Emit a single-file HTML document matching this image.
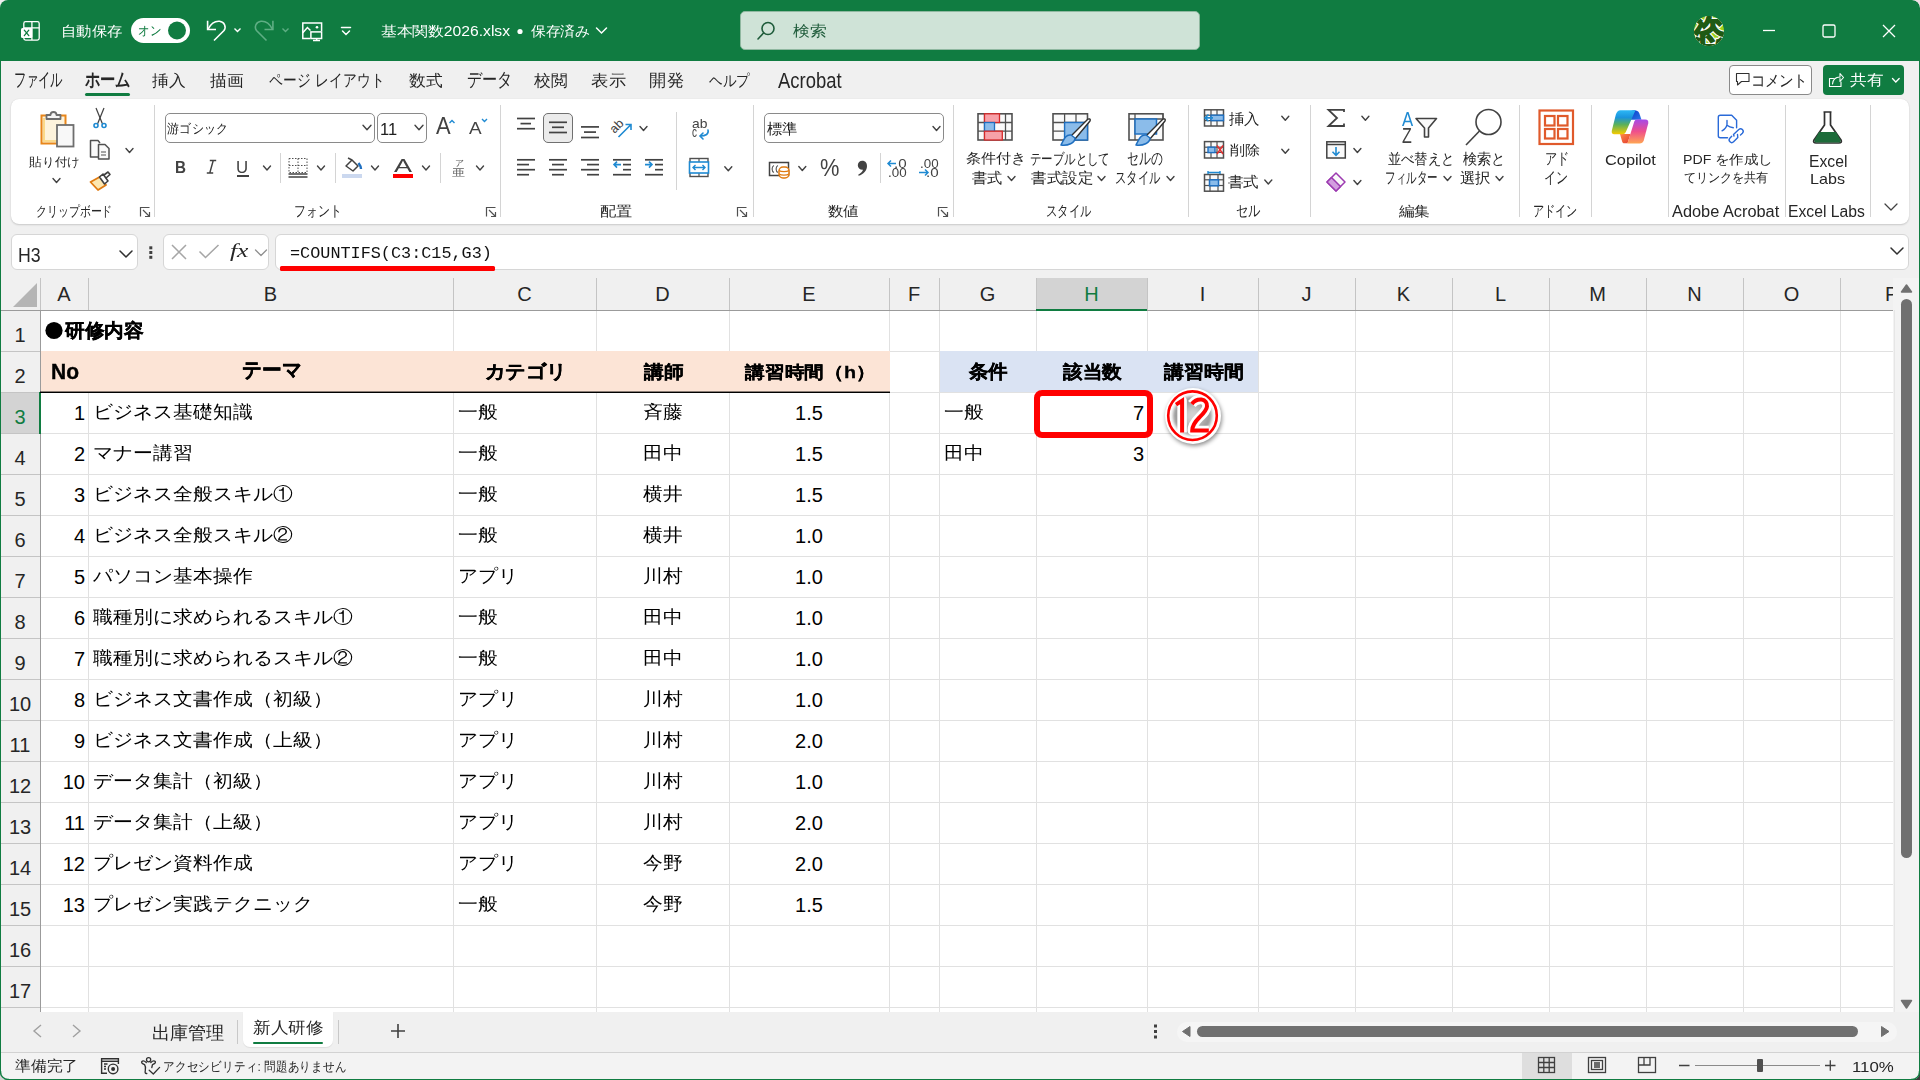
<!DOCTYPE html><html lang="ja"><head><meta charset="utf-8"><title>Excel</title><style>
*{box-sizing:border-box}
html,body{margin:0;padding:0}
body{width:1920px;height:1080px;overflow:hidden;position:relative;background:#f0f0f0;font-family:"Liberation Sans",sans-serif;color:#222}
.a{position:absolute}
.t{position:absolute;white-space:nowrap;line-height:1;transform-origin:0 0}
svg.o{position:absolute;left:0;top:0;overflow:visible}
</style></head><body>
<div class="a" style="left:0px;top:0px;width:1920px;height:61px;background:#107c41;border-radius:8px 8px 0 0"></div>
<div class="a" style="left:131px;top:18px;width:59px;height:25px;background:#fff;border-radius:13px"></div>
<div class="a" style="left:740px;top:11px;width:460px;height:39px;background:#cfe3d7;border-radius:5px;border:1px solid #8fb8a0"></div>
<div class="a" style="left:1px;top:61px;width:1918px;height:38px;background:#f0f0f0;"></div>
<div class="a" style="left:85px;top:93px;width:45px;height:3px;background:#107c41;border-radius:2px"></div>
<div class="a" style="left:1729px;top:65px;width:83px;height:30px;background:#fff;border:1px solid #8a8a8a;border-radius:4px"></div>
<div class="a" style="left:1823px;top:65px;width:81px;height:30px;background:#107c41;border-radius:4px"></div>
<div class="a" style="left:11px;top:99px;width:1898px;height:125px;background:#fff;border-radius:8px;box-shadow:0 1px 2px rgba(0,0,0,.16),0 0 1px rgba(0,0,0,.1)"></div>
<div class="a" style="left:154px;top:105px;width:1px;height:112px;background:#d4d4d4;"></div>
<div class="a" style="left:500px;top:105px;width:1px;height:112px;background:#d4d4d4;"></div>
<div class="a" style="left:753px;top:105px;width:1px;height:112px;background:#d4d4d4;"></div>
<div class="a" style="left:953px;top:105px;width:1px;height:112px;background:#d4d4d4;"></div>
<div class="a" style="left:1188px;top:105px;width:1px;height:112px;background:#d4d4d4;"></div>
<div class="a" style="left:1310px;top:105px;width:1px;height:112px;background:#d4d4d4;"></div>
<div class="a" style="left:1519px;top:105px;width:1px;height:112px;background:#d4d4d4;"></div>
<div class="a" style="left:1591px;top:105px;width:1px;height:112px;background:#d4d4d4;"></div>
<div class="a" style="left:1668px;top:105px;width:1px;height:112px;background:#d4d4d4;"></div>
<div class="a" style="left:1785px;top:105px;width:1px;height:112px;background:#d4d4d4;"></div>
<div class="a" style="left:1870px;top:105px;width:1px;height:112px;background:#d4d4d4;"></div>
<div class="a" style="left:165px;top:113px;width:210px;height:30px;background:#fff;border:1px solid #8a8a8a;border-radius:5px"></div>
<div class="a" style="left:377px;top:113px;width:50px;height:30px;background:#fff;border:1px solid #8a8a8a;border-radius:5px"></div>
<div class="a" style="left:237px;top:175px;width:12px;height:1.6px;background:#424242;"></div>
<div class="a" style="left:280px;top:153px;width:1px;height:30px;background:#d4d4d4;"></div>
<div class="a" style="left:334.6px;top:153px;width:1px;height:30px;background:#d4d4d4;"></div>
<div class="a" style="left:393px;top:174px;width:20px;height:4px;background:#ff0000;"></div>
<div class="a" style="left:439.6px;top:153px;width:1px;height:30px;background:#d4d4d4;"></div>
<div class="a" style="left:543px;top:113px;width:30px;height:30px;background:#ebebeb;border:1px solid #707070;border-radius:5px"></div>
<div class="a" style="left:676px;top:112px;width:1px;height:78px;background:#d4d4d4;"></div>
<div class="a" style="left:764px;top:113px;width:180px;height:30px;background:#fff;border:1px solid #8a8a8a;border-radius:5px"></div>
<div class="a" style="left:879.6px;top:153px;width:1px;height:30px;background:#d4d4d4;"></div>
<div class="a" style="left:11px;top:234px;width:127px;height:36px;background:#fff;border:1px solid #d6d6d6;border-radius:6px"></div>
<div class="a" style="left:163px;top:234px;width:106px;height:36px;background:#fff;border:1px solid #d6d6d6;border-radius:6px"></div>
<div class="a" style="left:275px;top:234px;width:1634px;height:36px;background:#fff;border:1px solid #d6d6d6;border-radius:6px"></div>
<div class="a" style="left:0px;top:270px;width:1920px;height:8px;background:#f0f0f0;"></div>
<div class="a" style="left:1px;top:278px;width:1894px;height:32px;background:#f0f0f0;"></div>
<div class="a" style="left:40px;top:310px;width:1853px;height:702px;background:#fff;"></div>
<div class="a" style="left:40px;top:278px;width:1px;height:32px;background:#c4c4c4;"></div>
<div class="a" style="left:88px;top:310px;width:1px;height:702px;background:#e1e1e1;"></div>
<div class="a" style="left:88px;top:278px;width:1px;height:32px;background:#c4c4c4;"></div>
<div class="a" style="left:453px;top:310px;width:1px;height:702px;background:#e1e1e1;"></div>
<div class="a" style="left:453px;top:278px;width:1px;height:32px;background:#c4c4c4;"></div>
<div class="a" style="left:596px;top:310px;width:1px;height:702px;background:#e1e1e1;"></div>
<div class="a" style="left:596px;top:278px;width:1px;height:32px;background:#c4c4c4;"></div>
<div class="a" style="left:729px;top:310px;width:1px;height:702px;background:#e1e1e1;"></div>
<div class="a" style="left:729px;top:278px;width:1px;height:32px;background:#c4c4c4;"></div>
<div class="a" style="left:889px;top:310px;width:1px;height:702px;background:#e1e1e1;"></div>
<div class="a" style="left:889px;top:278px;width:1px;height:32px;background:#c4c4c4;"></div>
<div class="a" style="left:939px;top:310px;width:1px;height:702px;background:#e1e1e1;"></div>
<div class="a" style="left:939px;top:278px;width:1px;height:32px;background:#c4c4c4;"></div>
<div class="a" style="left:1036px;top:310px;width:1px;height:702px;background:#e1e1e1;"></div>
<div class="a" style="left:1036px;top:278px;width:1px;height:32px;background:#c4c4c4;"></div>
<div class="a" style="left:1147px;top:310px;width:1px;height:702px;background:#e1e1e1;"></div>
<div class="a" style="left:1147px;top:278px;width:1px;height:32px;background:#c4c4c4;"></div>
<div class="a" style="left:1258px;top:310px;width:1px;height:702px;background:#e1e1e1;"></div>
<div class="a" style="left:1258px;top:278px;width:1px;height:32px;background:#c4c4c4;"></div>
<div class="a" style="left:1355px;top:310px;width:1px;height:702px;background:#e1e1e1;"></div>
<div class="a" style="left:1355px;top:278px;width:1px;height:32px;background:#c4c4c4;"></div>
<div class="a" style="left:1452px;top:310px;width:1px;height:702px;background:#e1e1e1;"></div>
<div class="a" style="left:1452px;top:278px;width:1px;height:32px;background:#c4c4c4;"></div>
<div class="a" style="left:1549px;top:310px;width:1px;height:702px;background:#e1e1e1;"></div>
<div class="a" style="left:1549px;top:278px;width:1px;height:32px;background:#c4c4c4;"></div>
<div class="a" style="left:1646px;top:310px;width:1px;height:702px;background:#e1e1e1;"></div>
<div class="a" style="left:1646px;top:278px;width:1px;height:32px;background:#c4c4c4;"></div>
<div class="a" style="left:1743px;top:310px;width:1px;height:702px;background:#e1e1e1;"></div>
<div class="a" style="left:1743px;top:278px;width:1px;height:32px;background:#c4c4c4;"></div>
<div class="a" style="left:1840px;top:310px;width:1px;height:702px;background:#e1e1e1;"></div>
<div class="a" style="left:1840px;top:278px;width:1px;height:32px;background:#c4c4c4;"></div>
<div class="a" style="left:40px;top:351px;width:1853px;height:1px;background:#e1e1e1;"></div>
<div class="a" style="left:40px;top:392px;width:1853px;height:1px;background:#e1e1e1;"></div>
<div class="a" style="left:40px;top:433px;width:1853px;height:1px;background:#e1e1e1;"></div>
<div class="a" style="left:40px;top:474px;width:1853px;height:1px;background:#e1e1e1;"></div>
<div class="a" style="left:40px;top:515px;width:1853px;height:1px;background:#e1e1e1;"></div>
<div class="a" style="left:40px;top:556px;width:1853px;height:1px;background:#e1e1e1;"></div>
<div class="a" style="left:40px;top:597px;width:1853px;height:1px;background:#e1e1e1;"></div>
<div class="a" style="left:40px;top:638px;width:1853px;height:1px;background:#e1e1e1;"></div>
<div class="a" style="left:40px;top:679px;width:1853px;height:1px;background:#e1e1e1;"></div>
<div class="a" style="left:40px;top:720px;width:1853px;height:1px;background:#e1e1e1;"></div>
<div class="a" style="left:40px;top:761px;width:1853px;height:1px;background:#e1e1e1;"></div>
<div class="a" style="left:40px;top:802px;width:1853px;height:1px;background:#e1e1e1;"></div>
<div class="a" style="left:40px;top:843px;width:1853px;height:1px;background:#e1e1e1;"></div>
<div class="a" style="left:40px;top:884px;width:1853px;height:1px;background:#e1e1e1;"></div>
<div class="a" style="left:40px;top:925px;width:1853px;height:1px;background:#e1e1e1;"></div>
<div class="a" style="left:40px;top:966px;width:1853px;height:1px;background:#e1e1e1;"></div>
<div class="a" style="left:40px;top:1007px;width:1853px;height:1px;background:#e1e1e1;"></div>
<div class="a" style="left:41px;top:351px;width:849px;height:41px;background:#fce4d6;"></div>
<div class="a" style="left:940px;top:351px;width:318px;height:41px;background:#dae3f3;"></div>
<div class="a" style="left:88px;top:311px;width:1px;height:40px;background:#fff;"></div>
<div class="a" style="left:1px;top:310px;width:39px;height:702px;background:#f0f0f0;"></div>
<div class="a" style="left:1px;top:351px;width:39px;height:1px;background:#c4c4c4;"></div>
<div class="a" style="left:1px;top:392px;width:39px;height:1px;background:#c4c4c4;"></div>
<div class="a" style="left:1px;top:433px;width:39px;height:1px;background:#c4c4c4;"></div>
<div class="a" style="left:1px;top:474px;width:39px;height:1px;background:#c4c4c4;"></div>
<div class="a" style="left:1px;top:515px;width:39px;height:1px;background:#c4c4c4;"></div>
<div class="a" style="left:1px;top:556px;width:39px;height:1px;background:#c4c4c4;"></div>
<div class="a" style="left:1px;top:597px;width:39px;height:1px;background:#c4c4c4;"></div>
<div class="a" style="left:1px;top:638px;width:39px;height:1px;background:#c4c4c4;"></div>
<div class="a" style="left:1px;top:679px;width:39px;height:1px;background:#c4c4c4;"></div>
<div class="a" style="left:1px;top:720px;width:39px;height:1px;background:#c4c4c4;"></div>
<div class="a" style="left:1px;top:761px;width:39px;height:1px;background:#c4c4c4;"></div>
<div class="a" style="left:1px;top:802px;width:39px;height:1px;background:#c4c4c4;"></div>
<div class="a" style="left:1px;top:843px;width:39px;height:1px;background:#c4c4c4;"></div>
<div class="a" style="left:1px;top:884px;width:39px;height:1px;background:#c4c4c4;"></div>
<div class="a" style="left:1px;top:925px;width:39px;height:1px;background:#c4c4c4;"></div>
<div class="a" style="left:1px;top:966px;width:39px;height:1px;background:#c4c4c4;"></div>
<div class="a" style="left:1px;top:1007px;width:39px;height:1px;background:#c4c4c4;"></div>
<div class="a" style="left:40px;top:310px;width:1px;height:702px;background:#9b9b9b;"></div>
<div class="a" style="left:1px;top:310px;width:1892px;height:1px;background:#9b9b9b;"></div>
<div class="a" style="left:1px;top:393px;width:39px;height:40px;background:#d3d3d3;"></div>
<div class="a" style="left:39px;top:392px;width:2px;height:42px;background:#107c41;"></div>
<div class="a" style="left:1037px;top:278px;width:110px;height:32px;background:#d3d3d3;"></div>
<div class="a" style="left:1036px;top:309px;width:111px;height:2px;background:#107c41;"></div>
<div class="t" style="left:40px;width:48px;text-align:center;top:284px;font-size:20px;color:#262626">A</div>
<div class="t" style="left:88px;width:365px;text-align:center;top:284px;font-size:20px;color:#262626">B</div>
<div class="t" style="left:453px;width:143px;text-align:center;top:284px;font-size:20px;color:#262626">C</div>
<div class="t" style="left:596px;width:133px;text-align:center;top:284px;font-size:20px;color:#262626">D</div>
<div class="t" style="left:729px;width:160px;text-align:center;top:284px;font-size:20px;color:#262626">E</div>
<div class="t" style="left:889px;width:50px;text-align:center;top:284px;font-size:20px;color:#262626">F</div>
<div class="t" style="left:939px;width:97px;text-align:center;top:284px;font-size:20px;color:#262626">G</div>
<div class="t" style="left:1036px;width:111px;text-align:center;top:284px;font-size:20px;color:#107c41">H</div>
<div class="t" style="left:1147px;width:111px;text-align:center;top:284px;font-size:20px;color:#262626">I</div>
<div class="t" style="left:1258px;width:97px;text-align:center;top:284px;font-size:20px;color:#262626">J</div>
<div class="t" style="left:1355px;width:97px;text-align:center;top:284px;font-size:20px;color:#262626">K</div>
<div class="t" style="left:1452px;width:97px;text-align:center;top:284px;font-size:20px;color:#262626">L</div>
<div class="t" style="left:1549px;width:97px;text-align:center;top:284px;font-size:20px;color:#262626">M</div>
<div class="t" style="left:1646px;width:97px;text-align:center;top:284px;font-size:20px;color:#262626">N</div>
<div class="t" style="left:1743px;width:97px;text-align:center;top:284px;font-size:20px;color:#262626">O</div>
<div class="t" style="left:1885px;top:284px;font-size:20px;color:#262626;width:8px;overflow:hidden">P</div>
<div class="t" style="left:0;width:40px;text-align:center;top:325px;font-size:20px;color:#262626">1</div>
<div class="t" style="left:0;width:40px;text-align:center;top:366px;font-size:20px;color:#262626">2</div>
<div class="t" style="left:0;width:40px;text-align:center;top:407px;font-size:20px;color:#107c41">3</div>
<div class="t" style="left:0;width:40px;text-align:center;top:448px;font-size:20px;color:#262626">4</div>
<div class="t" style="left:0;width:40px;text-align:center;top:489px;font-size:20px;color:#262626">5</div>
<div class="t" style="left:0;width:40px;text-align:center;top:530px;font-size:20px;color:#262626">6</div>
<div class="t" style="left:0;width:40px;text-align:center;top:571px;font-size:20px;color:#262626">7</div>
<div class="t" style="left:0;width:40px;text-align:center;top:612px;font-size:20px;color:#262626">8</div>
<div class="t" style="left:0;width:40px;text-align:center;top:653px;font-size:20px;color:#262626">9</div>
<div class="t" style="left:0;width:40px;text-align:center;top:694px;font-size:20px;color:#262626">10</div>
<div class="t" style="left:0;width:40px;text-align:center;top:735px;font-size:20px;color:#262626">11</div>
<div class="t" style="left:0;width:40px;text-align:center;top:776px;font-size:20px;color:#262626">12</div>
<div class="t" style="left:0;width:40px;text-align:center;top:817px;font-size:20px;color:#262626">13</div>
<div class="t" style="left:0;width:40px;text-align:center;top:858px;font-size:20px;color:#262626">14</div>
<div class="t" style="left:0;width:40px;text-align:center;top:899px;font-size:20px;color:#262626">15</div>
<div class="t" style="left:0;width:40px;text-align:center;top:940px;font-size:20px;color:#262626">16</div>
<div class="t" style="left:0;width:40px;text-align:center;top:981px;font-size:20px;color:#262626">17</div>
<div class="a" style="left:40px;top:392px;width:850px;height:1px;background:#000;"></div>
<div class="a" style="left:40px;top:391px;width:850px;height:1px;background:rgba(0,0,0,.45);"></div>
<div class="t" style="left:40px;width:45px;text-align:right;top:403px;font-size:20px;color:#000;">1</div>
<div class="t" style="left:93px;top:403px;font-size:20px;color:#000;transform:scaleY(0.91);">ビジネス基礎知識</div>
<div class="t" style="left:458px;top:403px;font-size:20px;color:#000;transform:scaleY(0.91);">一般</div>
<div class="t" style="left:596px;width:133px;text-align:center;top:403px;font-size:20px;color:#000;transform:scaleY(0.91);">斉藤</div>
<div class="t" style="left:729px;width:160px;text-align:center;top:403px;font-size:20px;color:#000;">1.5</div>
<div class="t" style="left:40px;width:45px;text-align:right;top:444px;font-size:20px;color:#000;">2</div>
<div class="t" style="left:93px;top:444px;font-size:20px;color:#000;transform:scaleY(0.91);">マナー講習</div>
<div class="t" style="left:458px;top:444px;font-size:20px;color:#000;transform:scaleY(0.91);">一般</div>
<div class="t" style="left:596px;width:133px;text-align:center;top:444px;font-size:20px;color:#000;transform:scaleY(0.91);">田中</div>
<div class="t" style="left:729px;width:160px;text-align:center;top:444px;font-size:20px;color:#000;">1.5</div>
<div class="t" style="left:40px;width:45px;text-align:right;top:485px;font-size:20px;color:#000;">3</div>
<div class="t" style="left:93px;top:485px;font-size:20px;color:#000;transform:scaleY(0.91);">ビジネス全般スキル①</div>
<div class="t" style="left:458px;top:485px;font-size:20px;color:#000;transform:scaleY(0.91);">一般</div>
<div class="t" style="left:596px;width:133px;text-align:center;top:485px;font-size:20px;color:#000;transform:scaleY(0.91);">横井</div>
<div class="t" style="left:729px;width:160px;text-align:center;top:485px;font-size:20px;color:#000;">1.5</div>
<div class="t" style="left:40px;width:45px;text-align:right;top:526px;font-size:20px;color:#000;">4</div>
<div class="t" style="left:93px;top:526px;font-size:20px;color:#000;transform:scaleY(0.91);">ビジネス全般スキル②</div>
<div class="t" style="left:458px;top:526px;font-size:20px;color:#000;transform:scaleY(0.91);">一般</div>
<div class="t" style="left:596px;width:133px;text-align:center;top:526px;font-size:20px;color:#000;transform:scaleY(0.91);">横井</div>
<div class="t" style="left:729px;width:160px;text-align:center;top:526px;font-size:20px;color:#000;">1.0</div>
<div class="t" style="left:40px;width:45px;text-align:right;top:567px;font-size:20px;color:#000;">5</div>
<div class="t" style="left:93px;top:567px;font-size:20px;color:#000;transform:scaleY(0.91);">パソコン基本操作</div>
<div class="t" style="left:458px;top:567px;font-size:20px;color:#000;transform:scaleY(0.91);">アプリ</div>
<div class="t" style="left:596px;width:133px;text-align:center;top:567px;font-size:20px;color:#000;transform:scaleY(0.91);">川村</div>
<div class="t" style="left:729px;width:160px;text-align:center;top:567px;font-size:20px;color:#000;">1.0</div>
<div class="t" style="left:40px;width:45px;text-align:right;top:608px;font-size:20px;color:#000;">6</div>
<div class="t" style="left:93px;top:608px;font-size:20px;color:#000;transform:scaleY(0.91);">職種別に求められるスキル①</div>
<div class="t" style="left:458px;top:608px;font-size:20px;color:#000;transform:scaleY(0.91);">一般</div>
<div class="t" style="left:596px;width:133px;text-align:center;top:608px;font-size:20px;color:#000;transform:scaleY(0.91);">田中</div>
<div class="t" style="left:729px;width:160px;text-align:center;top:608px;font-size:20px;color:#000;">1.0</div>
<div class="t" style="left:40px;width:45px;text-align:right;top:649px;font-size:20px;color:#000;">7</div>
<div class="t" style="left:93px;top:649px;font-size:20px;color:#000;transform:scaleY(0.91);">職種別に求められるスキル②</div>
<div class="t" style="left:458px;top:649px;font-size:20px;color:#000;transform:scaleY(0.91);">一般</div>
<div class="t" style="left:596px;width:133px;text-align:center;top:649px;font-size:20px;color:#000;transform:scaleY(0.91);">田中</div>
<div class="t" style="left:729px;width:160px;text-align:center;top:649px;font-size:20px;color:#000;">1.0</div>
<div class="t" style="left:40px;width:45px;text-align:right;top:690px;font-size:20px;color:#000;">8</div>
<div class="t" style="left:93px;top:690px;font-size:20px;color:#000;transform:scaleY(0.91);">ビジネス文書作成（初級）</div>
<div class="t" style="left:458px;top:690px;font-size:20px;color:#000;transform:scaleY(0.91);">アプリ</div>
<div class="t" style="left:596px;width:133px;text-align:center;top:690px;font-size:20px;color:#000;transform:scaleY(0.91);">川村</div>
<div class="t" style="left:729px;width:160px;text-align:center;top:690px;font-size:20px;color:#000;">1.0</div>
<div class="t" style="left:40px;width:45px;text-align:right;top:731px;font-size:20px;color:#000;">9</div>
<div class="t" style="left:93px;top:731px;font-size:20px;color:#000;transform:scaleY(0.91);">ビジネス文書作成（上級）</div>
<div class="t" style="left:458px;top:731px;font-size:20px;color:#000;transform:scaleY(0.91);">アプリ</div>
<div class="t" style="left:596px;width:133px;text-align:center;top:731px;font-size:20px;color:#000;transform:scaleY(0.91);">川村</div>
<div class="t" style="left:729px;width:160px;text-align:center;top:731px;font-size:20px;color:#000;">2.0</div>
<div class="t" style="left:40px;width:45px;text-align:right;top:772px;font-size:20px;color:#000;">10</div>
<div class="t" style="left:93px;top:772px;font-size:20px;color:#000;transform:scaleY(0.91);">データ集計（初級）</div>
<div class="t" style="left:458px;top:772px;font-size:20px;color:#000;transform:scaleY(0.91);">アプリ</div>
<div class="t" style="left:596px;width:133px;text-align:center;top:772px;font-size:20px;color:#000;transform:scaleY(0.91);">川村</div>
<div class="t" style="left:729px;width:160px;text-align:center;top:772px;font-size:20px;color:#000;">1.0</div>
<div class="t" style="left:40px;width:45px;text-align:right;top:813px;font-size:20px;color:#000;">11</div>
<div class="t" style="left:93px;top:813px;font-size:20px;color:#000;transform:scaleY(0.91);">データ集計（上級）</div>
<div class="t" style="left:458px;top:813px;font-size:20px;color:#000;transform:scaleY(0.91);">アプリ</div>
<div class="t" style="left:596px;width:133px;text-align:center;top:813px;font-size:20px;color:#000;transform:scaleY(0.91);">川村</div>
<div class="t" style="left:729px;width:160px;text-align:center;top:813px;font-size:20px;color:#000;">2.0</div>
<div class="t" style="left:40px;width:45px;text-align:right;top:854px;font-size:20px;color:#000;">12</div>
<div class="t" style="left:93px;top:854px;font-size:20px;color:#000;transform:scaleY(0.91);">プレゼン資料作成</div>
<div class="t" style="left:458px;top:854px;font-size:20px;color:#000;transform:scaleY(0.91);">アプリ</div>
<div class="t" style="left:596px;width:133px;text-align:center;top:854px;font-size:20px;color:#000;transform:scaleY(0.91);">今野</div>
<div class="t" style="left:729px;width:160px;text-align:center;top:854px;font-size:20px;color:#000;">2.0</div>
<div class="t" style="left:40px;width:45px;text-align:right;top:895px;font-size:20px;color:#000;">13</div>
<div class="t" style="left:93px;top:895px;font-size:20px;color:#000;transform:scaleY(0.91);">プレゼン実践テクニック</div>
<div class="t" style="left:458px;top:895px;font-size:20px;color:#000;transform:scaleY(0.91);">一般</div>
<div class="t" style="left:596px;width:133px;text-align:center;top:895px;font-size:20px;color:#000;transform:scaleY(0.91);">今野</div>
<div class="t" style="left:729px;width:160px;text-align:center;top:895px;font-size:20px;color:#000;">1.5</div>
<div class="t" style="left:944px;top:403px;font-size:20px;color:#000;transform:scaleY(0.91);">一般</div>
<div class="t" style="left:944px;top:444px;font-size:20px;color:#000;transform:scaleY(0.91);">田中</div>
<div class="t" style="left:1036px;width:108px;text-align:right;top:403px;font-size:20px;color:#000;">7</div>
<div class="t" style="left:1036px;width:108px;text-align:right;top:444px;font-size:20px;color:#000;">3</div>
<div class="a" style="left:1033.5px;top:389.5px;width:119px;height:48px;background:transparent;border:6px solid #ff0000;border-radius:8px"></div>
<div class="a" style="left:1164.5px;top:388px;width:56px;height:56px;border-radius:50%;background:#fff;box-shadow:1px 2px 4px rgba(0,0,0,.45)"></div>
<div class="a" style="left:1893px;top:278px;width:26px;height:734px;background:#f3f3f3;"></div>
<div class="a" style="left:1894px;top:310px;width:1px;height:702px;background:#e6e6e6;"></div>
<div class="a" style="left:1901px;top:299px;width:11px;height:559px;background:#707070;border-radius:6px"></div>
<div class="a" style="left:1px;top:1012px;width:1918px;height:40px;background:#f0f0f0;"></div>
<div class="a" style="left:237px;top:1020px;width:1px;height:24px;background:#c8c8c8;"></div>
<div class="a" style="left:243px;top:1012px;width:90px;height:35px;background:#fff;border-radius:0 0 7px 7px;box-shadow:0 1px 1px rgba(0,0,0,.08)"></div>
<div class="a" style="left:253px;top:1041.7px;width:70px;height:2.5px;background:#107c41;border-radius:1px"></div>
<div class="a" style="left:338px;top:1020px;width:1px;height:24px;background:#c8c8c8;"></div>
<div class="a" style="left:1177px;top:1022px;width:720px;height:20px;background:#f5f5f5;border-radius:10px"></div>
<div class="a" style="left:1197.4px;top:1026px;width:661px;height:11px;background:#707070;border-radius:6px"></div>
<div class="a" style="left:1px;top:1052px;width:1918px;height:27px;background:#f3f3f3;"></div>
<div class="a" style="left:1px;top:1052px;width:1918px;height:1px;background:#d2d2d2;"></div>
<div class="a" style="left:1522px;top:1053px;width:50px;height:26px;background:#dedede;"></div>
<div class="a" style="left:1695px;top:1065px;width:125px;height:1px;background:#8a8a8a;"></div>
<div class="a" style="left:1757px;top:1058.8px;width:6px;height:13.7px;background:#505050;border-radius:1px"></div>
<div class="a" style="left:0px;top:61px;width:1px;height:1019px;background:#107c41;"></div>
<div class="a" style="left:1919px;top:61px;width:1px;height:1019px;background:#107c41;"></div>
<div class="a" style="left:0px;top:1079px;width:1920px;height:1px;background:#107c41;"></div>
<div class="t" style="left:60.96px;top:24.07px;font-family:'Liberation Sans',sans-serif;font-size:15px;font-weight:normal;font-style:normal;color:#ffffff;transform:scale(1.0175,0.9286);">自動保存</div>
<div class="t" style="left:138.15px;top:24.08px;font-family:'Liberation Sans',sans-serif;font-size:14px;font-weight:normal;font-style:normal;color:#107c41;transform:scale(0.8462,0.9583);">オン</div>
<div class="t" style="left:381.02px;top:24.50px;font-family:'Liberation Sans',sans-serif;font-size:16px;font-weight:normal;font-style:normal;color:#ffffff;transform:scale(0.9808,0.8667);">基本関数2026.xlsx</div>
<div class="t" style="left:531.00px;top:24.50px;font-family:'Liberation Sans',sans-serif;font-size:16px;font-weight:normal;font-style:normal;color:#ffffff;transform:scale(0.9206,0.8667);">保存済み</div>
<div class="t" style="left:792.50px;top:23.00px;font-family:'Liberation Sans',sans-serif;font-size:15px;font-weight:normal;font-style:normal;color:#1e5b3a;transform:scale(1.1207,1.0000);">検索</div>
<div class="t" style="left:13.58px;top:70.81px;font-family:'Liberation Sans',sans-serif;font-size:17px;font-weight:normal;font-style:normal;color:#262626;transform:scale(0.7121,1.0929);">ファイル</div>
<div class="t" style="left:85.00px;top:70.81px;font-family:'Liberation Sans',sans-serif;font-size:17px;font-weight:bold;font-style:normal;color:#262626;transform:scale(0.8800,1.0929);">ホーム</div>
<div class="t" style="left:152.00px;top:73.00px;font-family:'Liberation Sans',sans-serif;font-size:17px;font-weight:normal;font-style:normal;color:#262626;transform:scale(1.0000,0.9562);">挿入</div>
<div class="t" style="left:210.00px;top:73.00px;font-family:'Liberation Sans',sans-serif;font-size:17px;font-weight:normal;font-style:normal;color:#262626;transform:scale(1.0000,0.9562);">描画</div>
<div class="t" style="left:269.18px;top:71.98px;font-family:'Liberation Sans',sans-serif;font-size:17px;font-weight:normal;font-style:normal;color:#262626;transform:scale(0.8235,1.0200);">ページ レイアウト</div>
<div class="t" style="left:409.00px;top:73.00px;font-family:'Liberation Sans',sans-serif;font-size:17px;font-weight:normal;font-style:normal;color:#262626;transform:scale(1.0000,0.9562);">数式</div>
<div class="t" style="left:467.13px;top:70.81px;font-family:'Liberation Sans',sans-serif;font-size:17px;font-weight:normal;font-style:normal;color:#262626;transform:scale(0.8723,1.0929);">データ</div>
<div class="t" style="left:534.00px;top:73.00px;font-family:'Liberation Sans',sans-serif;font-size:17px;font-weight:normal;font-style:normal;color:#262626;transform:scale(1.0000,0.9562);">校閲</div>
<div class="t" style="left:590.97px;top:73.00px;font-family:'Liberation Sans',sans-serif;font-size:17px;font-weight:normal;font-style:normal;color:#262626;transform:scale(1.0312,0.9562);">表示</div>
<div class="t" style="left:648.97px;top:71.98px;font-family:'Liberation Sans',sans-serif;font-size:17px;font-weight:normal;font-style:normal;color:#262626;transform:scale(1.0312,1.0200);">開発</div>
<div class="t" style="left:709.00px;top:73.00px;font-family:'Liberation Sans',sans-serif;font-size:17px;font-weight:normal;font-style:normal;color:#262626;transform:scale(0.8077,0.9562);">ヘルプ</div>
<div class="t" style="left:778.00px;top:70.45px;font-family:'Liberation Sans',sans-serif;font-size:17px;font-weight:normal;font-style:normal;color:#262626;transform:scale(1.0847,1.2750);">Acrobat</div>
<div class="t" style="left:1751.41px;top:71.92px;font-family:'Liberation Sans',sans-serif;font-size:15px;font-weight:normal;font-style:normal;color:#262626;transform:scale(0.9444,1.0385);">コメント</div>
<div class="t" style="left:1849.70px;top:73.40px;font-family:'Liberation Sans',sans-serif;font-size:16px;font-weight:normal;font-style:normal;color:#ffffff;transform:scale(1.0548,0.9533);">共有</div>
<div class="t" style="left:35.74px;top:203.57px;font-family:'Liberation Sans',sans-serif;font-size:15px;font-weight:normal;font-style:normal;color:#262626;transform:scale(0.7277,0.9286);">クリップボード</div>
<div class="t" style="left:294.01px;top:203.00px;font-family:'Liberation Sans',sans-serif;font-size:15px;font-weight:normal;font-style:normal;color:#262626;transform:scale(0.7944,1.0000);">フォント</div>
<div class="t" style="left:600.35px;top:203.79px;font-family:'Liberation Sans',sans-serif;font-size:15px;font-weight:normal;font-style:normal;color:#262626;transform:scale(1.0500,0.9071);">配置</div>
<div class="t" style="left:828.30px;top:203.79px;font-family:'Liberation Sans',sans-serif;font-size:15px;font-weight:normal;font-style:normal;color:#262626;transform:scale(1.0033,0.9071);">数値</div>
<div class="t" style="left:1046.40px;top:203.03px;font-family:'Liberation Sans',sans-serif;font-size:15px;font-weight:normal;font-style:normal;color:#262626;transform:scale(0.7500,0.9846);">スタイル</div>
<div class="t" style="left:1236.08px;top:201.80px;font-family:'Liberation Sans',sans-serif;font-size:15px;font-weight:normal;font-style:normal;color:#262626;transform:scale(0.8172,1.0667);">セル</div>
<div class="t" style="left:1399.00px;top:204.09px;font-family:'Liberation Sans',sans-serif;font-size:15px;font-weight:normal;font-style:normal;color:#262626;transform:scale(1.0207,0.9143);">編集</div>
<div class="t" style="left:1532.77px;top:203.03px;font-family:'Liberation Sans',sans-serif;font-size:15px;font-weight:normal;font-style:normal;color:#262626;transform:scale(0.7328,0.9846);">アドイン</div>
<div class="t" style="left:1672.40px;top:202.78px;font-family:'Liberation Sans',sans-serif;font-size:15px;font-weight:normal;font-style:normal;color:#262626;transform:scale(1.0898,1.1091);">Adobe Acrobat</div>
<div class="t" style="left:1788.25px;top:202.78px;font-family:'Liberation Sans',sans-serif;font-size:15px;font-weight:normal;font-style:normal;color:#262626;transform:scale(1.0472,1.1091);">Excel Labs</div>
<div class="t" style="left:29.20px;top:154.59px;font-family:'Liberation Sans',sans-serif;font-size:15px;font-weight:normal;font-style:normal;color:#262626;transform:scale(0.8542,0.8133);">貼り付け</div>
<div class="t" style="left:166.58px;top:121.11px;font-family:'Liberation Sans',sans-serif;font-size:15px;font-weight:normal;font-style:normal;color:#202020;transform:scale(0.8239,0.8929);">游ゴシック</div>
<div class="t" style="left:379.90px;top:119.55px;font-family:'Liberation Sans',sans-serif;font-size:15px;font-weight:normal;font-style:normal;color:#202020;transform:scale(1.1000,1.1500);">11</div>
<div class="t" style="left:436.00px;top:114.31px;font-family:'Liberation Sans',sans-serif;font-size:19px;font-weight:normal;font-style:normal;color:#424242;transform:scale(1.1538,1.2308);">A</div>
<div class="t" style="left:469.00px;top:119.92px;font-family:'Liberation Sans',sans-serif;font-size:16px;font-weight:normal;font-style:normal;color:#424242;transform:scale(1.1818,1.0833);">A</div>
<div class="t" style="left:174.55px;top:158.92px;font-family:'Liberation Sans',sans-serif;font-size:16px;font-weight:bold;font-style:normal;color:#424242;transform:scale(0.9500,1.0833);">B</div>
<div class="t" style="left:236.45px;top:158.92px;font-family:'Liberation Sans',sans-serif;font-size:16px;font-weight:normal;font-style:normal;color:#424242;transform:scale(1.0500,1.0833);">U</div>
<div class="t" style="left:394.00px;top:156.42px;font-family:'Liberation Sans',sans-serif;font-size:18px;font-weight:normal;font-style:normal;color:#424242;transform:scale(1.5000,1.0385);">A</div>
<div class="t" style="left:454.83px;top:159.00px;font-family:'Liberation Sans',sans-serif;font-size:8px;font-weight:normal;font-style:normal;color:#606060;transform:scale(1.1667,1.1667);">ア</div>
<div class="t" style="left:452.00px;top:168.00px;font-family:'Liberation Sans',sans-serif;font-size:11px;font-weight:normal;font-style:normal;color:#606060;transform:scale(1.1818,0.9000);">亜</div>
<div class="t" style="left:692.00px;top:116.89px;font-family:'Liberation Sans',sans-serif;font-size:12px;font-weight:normal;font-style:normal;color:#424242;transform:scale(1.1538,1.1111);">ab</div>
<div class="t" style="left:692.00px;top:125.57px;font-family:'Liberation Sans',sans-serif;font-size:12px;font-weight:normal;font-style:normal;color:#424242;transform:scale(0.8333,1.1429);">c</div>
<div class="t" style="left:767.00px;top:120.70px;font-family:'Liberation Sans',sans-serif;font-size:15px;font-weight:normal;font-style:normal;color:#202020;transform:scale(1.0172,1.0000);">標準</div>
<div class="t" style="left:819.79px;top:156.48px;font-family:'Liberation Sans',sans-serif;font-size:18px;font-weight:normal;font-style:normal;color:#424242;transform:scale(1.2133,1.3615);">%</div>
<div class="t" style="left:893.62px;top:156.81px;font-family:'Liberation Sans',sans-serif;font-size:11px;font-weight:normal;font-style:normal;color:#424242;transform:scale(1.3750,1.1875);">.0</div>
<div class="t" style="left:887.79px;top:166.88px;font-family:'Liberation Sans',sans-serif;font-size:11px;font-weight:normal;font-style:normal;color:#424242;transform:scale(1.2143,1.1250);">.00</div>
<div class="t" style="left:919.79px;top:156.81px;font-family:'Liberation Sans',sans-serif;font-size:11px;font-weight:normal;font-style:normal;color:#424242;transform:scale(1.2143,1.1875);">.00</div>
<div class="t" style="left:925.62px;top:166.88px;font-family:'Liberation Sans',sans-serif;font-size:11px;font-weight:normal;font-style:normal;color:#424242;transform:scale(1.3750,1.1250);">.0</div>
<div class="t" style="left:965.69px;top:151.47px;font-family:'Liberation Sans',sans-serif;font-size:15px;font-weight:normal;font-style:normal;color:#262626;transform:scale(1.0054,0.9267);">条件付き</div>
<div class="t" style="left:971.69px;top:170.00px;font-family:'Liberation Sans',sans-serif;font-size:15px;font-weight:normal;font-style:normal;color:#262626;transform:scale(1.0103,1.0000);">書式</div>
<div class="t" style="left:1029.84px;top:151.41px;font-family:'Liberation Sans',sans-serif;font-size:15px;font-weight:normal;font-style:normal;color:#262626;transform:scale(0.7608,0.9929);">テーブルとして</div>
<div class="t" style="left:1030.97px;top:170.00px;font-family:'Liberation Sans',sans-serif;font-size:15px;font-weight:normal;font-style:normal;color:#262626;transform:scale(1.0345,1.0000);">書式設定</div>
<div class="t" style="left:1127.19px;top:148.93px;font-family:'Liberation Sans',sans-serif;font-size:15px;font-weight:normal;font-style:normal;color:#262626;transform:scale(0.8091,1.1583);">セルの</div>
<div class="t" style="left:1115.17px;top:168.85px;font-family:'Liberation Sans',sans-serif;font-size:15px;font-weight:normal;font-style:normal;color:#262626;transform:scale(0.7638,1.0769);">スタイル</div>
<div class="t" style="left:1229.20px;top:110.63px;font-family:'Liberation Sans',sans-serif;font-size:15px;font-weight:normal;font-style:normal;color:#262626;transform:scale(1.0034,0.9714);">挿入</div>
<div class="t" style="left:1230.00px;top:142.99px;font-family:'Liberation Sans',sans-serif;font-size:15px;font-weight:normal;font-style:normal;color:#262626;transform:scale(0.9759,0.9071);">削除</div>
<div class="t" style="left:1228.20px;top:174.33px;font-family:'Liberation Sans',sans-serif;font-size:15px;font-weight:normal;font-style:normal;color:#262626;transform:scale(1.0034,0.9714);">書式</div>
<div class="t" style="left:1401.50px;top:109.75px;font-family:'Liberation Sans',sans-serif;font-size:16px;font-weight:normal;font-style:normal;color:#1f8ad2;transform:scale(1.0455,1.2500);">A</div>
<div class="t" style="left:1402.00px;top:125.12px;font-family:'Liberation Sans',sans-serif;font-size:16px;font-weight:normal;font-style:normal;color:#424242;transform:scale(1.0000,1.3750);">Z</div>
<div class="t" style="left:1388.00px;top:151.41px;font-family:'Liberation Sans',sans-serif;font-size:15px;font-weight:normal;font-style:normal;color:#262626;transform:scale(0.8806,0.9929);">並べ替えと</div>
<div class="t" style="left:1384.58px;top:168.85px;font-family:'Liberation Sans',sans-serif;font-size:15px;font-weight:normal;font-style:normal;color:#262626;transform:scale(0.7083,1.0769);">フィルター</div>
<div class="t" style="left:1463.30px;top:151.41px;font-family:'Liberation Sans',sans-serif;font-size:15px;font-weight:normal;font-style:normal;color:#262626;transform:scale(0.9405,0.9929);">検索と</div>
<div class="t" style="left:1460.27px;top:170.00px;font-family:'Liberation Sans',sans-serif;font-size:15px;font-weight:normal;font-style:normal;color:#262626;transform:scale(1.0250,1.0000);">選択</div>
<div class="t" style="left:1544.59px;top:150.26px;font-family:'Liberation Sans',sans-serif;font-size:15px;font-weight:normal;font-style:normal;color:#262626;transform:scale(0.8074,1.0692);">アド</div>
<div class="t" style="left:1543.79px;top:168.85px;font-family:'Liberation Sans',sans-serif;font-size:15px;font-weight:normal;font-style:normal;color:#262626;transform:scale(0.8074,1.0769);">イン</div>
<div class="t" style="left:1604.84px;top:151.97px;font-family:'Liberation Sans',sans-serif;font-size:17px;font-weight:normal;font-style:normal;color:#262626;transform:scale(0.9615,0.9133);">Copilot</div>
<div class="t" style="left:1683.05px;top:153.15px;font-family:'Liberation Sans',sans-serif;font-size:15px;font-weight:normal;font-style:normal;color:#262626;transform:scale(0.9451,0.8467);">PDF を作成し</div>
<div class="t" style="left:1684.20px;top:171.15px;font-family:'Liberation Sans',sans-serif;font-size:15px;font-weight:normal;font-style:normal;color:#262626;transform:scale(0.7961,0.8533);">てリンクを共有</div>
<div class="t" style="left:1808.72px;top:152.94px;font-family:'Liberation Sans',sans-serif;font-size:16px;font-weight:normal;font-style:normal;color:#262626;transform:scale(0.9811,1.0583);">Excel</div>
<div class="t" style="left:1809.99px;top:172.45px;font-family:'Liberation Sans',sans-serif;font-size:16px;font-weight:normal;font-style:normal;color:#262626;transform:scale(1.0091,0.9500);">Labs</div>
<div class="t" style="left:18.36px;top:244.51px;font-family:'Liberation Sans',sans-serif;font-size:17px;font-weight:normal;font-style:normal;color:#262626;transform:scale(1.0425,1.1958);">H3</div>
<div class="t" style="left:230.00px;top:240.03px;font-family:'Liberation Serif',serif;font-size:20px;font-weight:normal;font-style:italic;color:#262626;transform:scale(1.2786,0.9850);">fx</div>
<div class="t" style="left:289.61px;top:244.50px;font-family:'Liberation Mono',monospace;font-size:17px;font-weight:normal;font-style:normal;color:#111111;transform:scale(0.9895,1.0000);">=COUNTIFS(C3:C15,G3)</div>
<div class="t" style="left:64.70px;top:321.00px;font-family:'Liberation Sans',sans-serif;font-size:20px;font-weight:bold;font-style:normal;color:#000000;transform:scale(0.9825,0.9500);-webkit-text-stroke:0.35px #000">研修内容</div>
<div class="t" style="left:50.95px;top:360.23px;font-family:'Liberation Sans',sans-serif;font-size:20px;font-weight:bold;font-style:normal;color:#000000;transform:scale(1.0500,1.0893);-webkit-text-stroke:0.35px #000">No</div>
<div class="t" style="left:241.51px;top:359.32px;font-family:'Liberation Sans',sans-serif;font-size:20px;font-weight:bold;font-style:normal;color:#000000;transform:scale(0.9914,1.0588);-webkit-text-stroke:0.35px #000">テーマ</div>
<div class="t" style="left:484.99px;top:361.55px;font-family:'Liberation Sans',sans-serif;font-size:20px;font-weight:bold;font-style:normal;color:#000000;transform:scale(1.0135,0.9474);-webkit-text-stroke:0.35px #000">カテゴリ</div>
<div class="t" style="left:643.75px;top:362.50px;font-family:'Liberation Sans',sans-serif;font-size:20px;font-weight:bold;font-style:normal;color:#000000;transform:scale(0.9936,0.9000);-webkit-text-stroke:0.35px #000">講師</div>
<div class="t" style="left:745.00px;top:362.50px;font-family:'Liberation Sans',sans-serif;font-size:20px;font-weight:bold;font-style:normal;color:#000000;transform:scale(0.9896,0.8571);-webkit-text-stroke:0.35px #000">講習時間（h）</div>
<div class="t" style="left:968.75px;top:361.55px;font-family:'Liberation Sans',sans-serif;font-size:20px;font-weight:bold;font-style:normal;color:#000000;transform:scale(0.9688,0.9474);-webkit-text-stroke:0.35px #000">条件</div>
<div class="t" style="left:1062.50px;top:362.50px;font-family:'Liberation Sans',sans-serif;font-size:20px;font-weight:bold;font-style:normal;color:#000000;transform:scale(0.9792,0.9000);-webkit-text-stroke:0.35px #000">該当数</div>
<div class="t" style="left:1163.75px;top:362.50px;font-family:'Liberation Sans',sans-serif;font-size:20px;font-weight:bold;font-style:normal;color:#000000;transform:scale(0.9968,0.9000);-webkit-text-stroke:0.35px #000">講習時間</div>
<div class="t" style="left:152.25px;top:1024.00px;font-family:'Liberation Sans',sans-serif;font-size:17px;font-weight:normal;font-style:normal;color:#262626;transform:scale(1.0515,1.0438);">出庫管理</div>
<div class="t" style="left:253.30px;top:1020.00px;font-family:'Liberation Sans',sans-serif;font-size:17px;font-weight:normal;font-style:normal;color:#262626;transform:scale(1.0358,0.9412);">新人研修</div>
<div class="t" style="left:14.95px;top:1058.30px;font-family:'Liberation Sans',sans-serif;font-size:15px;font-weight:normal;font-style:normal;color:#262626;transform:scale(1.0526,1.0000);">準備完了</div>
<div class="t" style="left:162.51px;top:1059.11px;font-family:'Liberation Sans',sans-serif;font-size:15px;font-weight:normal;font-style:normal;color:#262626;transform:scale(0.7866,0.8867);">アクセシビリティ: 問題ありません</div>
<div class="t" style="left:1851.95px;top:1060.37px;font-family:'Liberation Sans',sans-serif;font-size:16px;font-weight:normal;font-style:normal;color:#262626;transform:scale(1.0526,0.9333);">110%</div>
<svg class="o" width="1920" height="1080" viewBox="0 0 1920 1080"><g fill="none" stroke="#fff" stroke-width="1.3"><rect x="23.8" y="21.7" width="15.4" height="18.4" rx="1.8"/><path d="M31.9 21.7 L31.9 40.1 M23.8 27.8 L39.2 27.8"/></g><rect x="21" y="28" width="11.3" height="9.9" rx="1.5" fill="#fff"/><path d="M24.3 30.2 L28.8 35.6 M28.8 30.2 L24.3 35.6" stroke="#107c41" stroke-width="1.3" stroke-linecap="round"/><circle cx="177" cy="30.5" r="9" fill="#107c41"/><g fill="none" stroke="#fff" stroke-width="1.6" stroke-linecap="butt" stroke-linejoin="miter"><path d="M207.6 20.8 L207.6 29.5 L216 29.5"/><path d="M208.2 29 C211 23.5 215.5 21 219.5 21.3 C224.5 21.8 226.5 27 224 30.5 L214 40.5"/></g><path d="M234.5 28.5 L237.5 31.5 L240.5 28.5" fill="none" stroke="#fff" stroke-width="1.4"/><g fill="none" stroke="#5fae84" stroke-width="1.6" stroke-linecap="butt" stroke-linejoin="miter"><path d="M272.9 20.8 L272.9 29.5 L264.5 29.5"/><path d="M272.3 29 C269.5 23.5 265 21 261 21.3 C256 21.8 254 27 256.5 30.5 L266.5 40.5"/></g><path d="M282.5 28.5 L285.5 31.5 L288.5 28.5" fill="none" stroke="#5fae84" stroke-width="1.4"/><g fill="none" stroke="#fff" stroke-width="1.5" stroke-linejoin="miter"><path d="M310 38.5 L302.8 38.5 L302.8 23 L321.6 23 L321.6 31"/><path d="M302.8 32.8 L307.4 27.5 L310.5 30.5"/><rect x="310.9" y="31.9" width="10.7" height="6.6"/><path d="M316.7 38.5 L316.7 40.5 M313 40.5 L320 40.5"/></g><circle cx="317" cy="27.3" r="1.3" fill="#fff"/><g fill="none" stroke="#fff" stroke-width="1.5" stroke-linecap="round"><path d="M341.5 27.5 L350.5 27.5"/><path d="M342.5 31 L346 34.5 L349.5 31"/></g><circle cx="520" cy="31.5" r="2.6" fill="#fff"/><path d="M596.5 28 L601.5 33 L606.5 28" fill="none" stroke="#fff" stroke-width="1.5" stroke-linecap="round"/><g fill="none" stroke="#1e5b3a" stroke-width="1.6" stroke-linecap="round"><circle cx="768" cy="28.5" r="6"/><path d="M763.5 33 L758 39"/></g><defs><clipPath id="avc"><circle cx="1709" cy="31" r="15"/></clipPath></defs><circle cx="1709" cy="31" r="15" fill="#9bd11a"/><g clip-path="url(#avc)"><text x="1709" y="43" text-anchor="middle" font-family="Liberation Sans" font-size="33" font-weight="bold" fill="#fff" stroke="#fff" stroke-width="4">恣</text><text x="1709" y="43" text-anchor="middle" font-family="Liberation Sans" font-size="33" font-weight="bold" fill="#1f5a14" stroke="#1f5a14" stroke-width="1.8">恣</text></g><g fill="none" stroke="#fff" stroke-width="1.3"><path d="M1763 30.5 L1775 30.5"/><rect x="1823" y="25" width="12" height="12" rx="1.5"/><path d="M1883 25 L1895 37 M1895 25 L1883 37"/></g><path d="M1736.5 73.5 L1749 73.5 L1749 81.5 L1741.5 81.5 L1737.5 85 L1737.5 81.5 L1736.5 81.5 Z" fill="none" stroke="#303030" stroke-width="1.1" stroke-linejoin="round"/><g fill="none" stroke="#fff" stroke-width="1.1" stroke-linejoin="round" stroke-linecap="round"><path d="M1833.5 78.5 L1829.5 78.5 L1829.5 86.5 L1841 86.5 L1841 82"/><path d="M1832.5 84 C1833 79 1836 77 1840 77 L1840 73.5 L1843.5 77.5 L1840 81.5 L1840 78.5"/></g><path d="M1892.5 78.5 L1895.8 82 L1899.2 78.5" fill="none" stroke="#fff" stroke-width="1.3" stroke-linecap="round"/><g fill="none" stroke="#505050" stroke-width="1.2"><path d="M140.5 216.5 L140.5 207.5 L149.5 207.5"/><path d="M143 210 L149.5 216.5 M149.5 212 L149.5 216.5 L145 216.5"/></g><g fill="none" stroke="#505050" stroke-width="1.2"><path d="M486.5 216.5 L486.5 207.5 L495.5 207.5"/><path d="M489 210 L495.5 216.5 M495.5 212 L495.5 216.5 L491 216.5"/></g><g fill="none" stroke="#505050" stroke-width="1.2"><path d="M737.5 216.5 L737.5 207.5 L746.5 207.5"/><path d="M740 210 L746.5 216.5 M746.5 212 L746.5 216.5 L742 216.5"/></g><g fill="none" stroke="#505050" stroke-width="1.2"><path d="M938.5 216.5 L938.5 207.5 L947.5 207.5"/><path d="M941 210 L947.5 216.5 M947.5 212 L947.5 216.5 L943 216.5"/></g><path d="M1885.0 204.0 L1891 210.0 L1897.0 204.0" fill="none" stroke="#424242" stroke-width="1.25" stroke-linecap="round" stroke-linejoin="round"/><rect x="41.5" y="115.5" width="24" height="28" fill="#fdf3dc" stroke="#e8861a" stroke-width="2"/><path d="M44 118 L44 141 L63 141" fill="none" stroke="#fbd98a" stroke-width="2"/><path d="M46.5 119 L46.5 115 L50.5 115 C50.5 111 56.5 111 56.5 115 L60.5 115 L60.5 119 Z" fill="#f5f5f5" stroke="#6e6e6e" stroke-width="1.8" stroke-linejoin="round"/><rect x="57" y="125" width="16.5" height="21.5" fill="#f8f8f8" stroke="#6e6e6e" stroke-width="1.8"/><path d="M53.0 178.5 L56.5 182.5 L60.0 178.5" fill="none" stroke="#424242" stroke-width="1.4" stroke-linecap="round" stroke-linejoin="round"/><g fill="none" stroke="#424242" stroke-width="1.2"><path d="M96 108 L102.5 124"/><path d="M104 108 L97.5 124"/></g><g fill="none" stroke="#1f8ad2" stroke-width="1.6"><circle cx="96" cy="125.5" r="2"/><circle cx="104" cy="125.5" r="2"/></g><g fill="#fafafa" stroke="#505050" stroke-width="1.5" stroke-linejoin="round"><path d="M98.5 157 L90.5 157 L90.5 140.5 L98 140.5 L100 143"/><path d="M98.5 159 L98.5 144.5 L105 144.5 L109 148.5 L109 159 Z"/></g><path d="M101 152 L106 152 M101 155 L106 155" stroke="#505050" stroke-width="1.2"/><path d="M126.0 148.5 L129.5 152.5 L133.0 148.5" fill="none" stroke="#424242" stroke-width="1.4" stroke-linecap="round" stroke-linejoin="round"/><path d="M90.5 182 L100.5 176.5 L106 185 L98 190 Z" fill="#fde7b0" stroke="#e07a10" stroke-width="1.8" stroke-linejoin="round"/><path d="M99.5 177 L103 174 L108 181 L104.5 184 Z" fill="#fff" stroke="#404040" stroke-width="1.6" stroke-linejoin="round"/><path d="M104 175 L108 172 L110 174.5 L106 178" fill="none" stroke="#404040" stroke-width="1.6" stroke-linejoin="round"/><path d="M363.0 125.25 L367 129.75 L371.0 125.25" fill="none" stroke="#424242" stroke-width="1.4" stroke-linecap="round" stroke-linejoin="round"/><path d="M415.0 125.25 L419 129.75 L423.0 125.25" fill="none" stroke="#424242" stroke-width="1.4" stroke-linecap="round" stroke-linejoin="round"/><path d="M449.5 123 L452 120.5 L454.5 123" fill="none" stroke="#1f8ad2" stroke-width="1.4"/><path d="M482 119 L484.5 121.5 L487 119" fill="none" stroke="#1f8ad2" stroke-width="1.4"/><path d="M209.8 160.6 L216.2 160.6 M206.8 172.9 L213.2 172.9 M213.2 160.6 L209.8 172.9" stroke="#424242" stroke-width="1.5" fill="none"/><path d="M263.5 166.0 L267 170.0 L270.5 166.0" fill="none" stroke="#424242" stroke-width="1.4" stroke-linecap="round" stroke-linejoin="round"/><g fill="none" stroke="#505050" stroke-width="1" stroke-dasharray="1.5 1.5"><rect x="289" y="158.5" width="18" height="14"/><path d="M298 158.5 L298 172.5 M289 165.5 L307 165.5"/></g><path d="M288.5 174 L307.5 174 M288.5 177 L307.5 177" stroke="#424242" stroke-width="1.6"/><path d="M317.5 166.0 L321 170.0 L324.5 166.0" fill="none" stroke="#424242" stroke-width="1.4" stroke-linecap="round" stroke-linejoin="round"/><rect x="342" y="174" width="20" height="4" fill="#cbd8ef"/><path d="M346 166 L352 160 L358 166 L353 171 Z" fill="#fff" stroke="#424242" stroke-width="1.5" stroke-linejoin="round"/><path d="M348 158 L352 160" stroke="#424242" stroke-width="1.4"/><path d="M358.5 163 C360 165 361 167 361 169" stroke="#1f6fc0" stroke-width="2.4" fill="none"/><path d="M371.5 166.0 L375 170.0 L378.5 166.0" fill="none" stroke="#424242" stroke-width="1.4" stroke-linecap="round" stroke-linejoin="round"/><path d="M422.5 166.0 L426 170.0 L429.5 166.0" fill="none" stroke="#424242" stroke-width="1.4" stroke-linecap="round" stroke-linejoin="round"/><path d="M476.5 166.0 L480 170.0 L483.5 166.0" fill="none" stroke="#424242" stroke-width="1.4" stroke-linecap="round" stroke-linejoin="round"/><path d="M517 118.5 L535 118.5" stroke="#424242" stroke-width="1.7"/><path d="M520.5 123.6 L531 123.6" stroke="#424242" stroke-width="1.7"/><path d="M517 128.7 L535 128.7" stroke="#424242" stroke-width="1.7"/><path d="M549 122.3 L567 122.3" stroke="#424242" stroke-width="1.7"/><path d="M552 127.3 L564 127.3" stroke="#424242" stroke-width="1.7"/><path d="M549 132.5 L567 132.5" stroke="#424242" stroke-width="1.7"/><path d="M581 126.9 L599 126.9" stroke="#424242" stroke-width="1.7"/><path d="M584 132.1 L596 132.1" stroke="#424242" stroke-width="1.7"/><path d="M581 137.5 L599 137.5" stroke="#424242" stroke-width="1.7"/><text x="0" y="0" font-family="Liberation Sans" font-size="12.5" fill="#424242" transform="translate(614.5 134) rotate(-45)">ab</text><path d="M618.5 137 L631 124.5 M625.5 124.5 L631 124.5 L631 130" fill="none" stroke="#1f8ad2" stroke-width="1.6"/><path d="M640.0 126.5 L643.5 130.5 L647.0 126.5" fill="none" stroke="#424242" stroke-width="1.4" stroke-linecap="round" stroke-linejoin="round"/><path d="M708 130 C709 134 706 136 700 136 M703 133 L700 136 L703 139" fill="none" stroke="#1f8ad2" stroke-width="1.6" stroke-linecap="round"/><path d="M517 159.8 L535 159.8" stroke="#424242" stroke-width="1.7"/><path d="M517 164.6 L529 164.6" stroke="#424242" stroke-width="1.7"/><path d="M517 169.7 L535 169.7" stroke="#424242" stroke-width="1.7"/><path d="M517 174.7 L529 174.7" stroke="#424242" stroke-width="1.7"/><path d="M549 159.8 L567 159.8" stroke="#424242" stroke-width="1.7"/><path d="M552 164.6 L564 164.6" stroke="#424242" stroke-width="1.7"/><path d="M549 169.7 L567 169.7" stroke="#424242" stroke-width="1.7"/><path d="M552 174.7 L564 174.7" stroke="#424242" stroke-width="1.7"/><path d="M581 159.8 L599 159.8" stroke="#424242" stroke-width="1.7"/><path d="M587 164.6 L599 164.6" stroke="#424242" stroke-width="1.7"/><path d="M581 169.7 L599 169.7" stroke="#424242" stroke-width="1.7"/><path d="M587 174.7 L599 174.7" stroke="#424242" stroke-width="1.7"/><path d="M613 159.8 L631 159.8" stroke="#424242" stroke-width="1.7"/><path d="M623 164.6 L631 164.6" stroke="#424242" stroke-width="1.7"/><path d="M623 169.7 L631 169.7" stroke="#424242" stroke-width="1.7"/><path d="M613 174.7 L631 174.7" stroke="#424242" stroke-width="1.7"/><path d="M621 164.6 L614 164.6 M617 161.6 L614 164.6 L617 167.6" fill="none" stroke="#1f8ad2" stroke-width="1.6"/><path d="M645 159.8 L663 159.8" stroke="#424242" stroke-width="1.7"/><path d="M655 164.6 L663 164.6" stroke="#424242" stroke-width="1.7"/><path d="M655 169.7 L663 169.7" stroke="#424242" stroke-width="1.7"/><path d="M645 174.7 L663 174.7" stroke="#424242" stroke-width="1.7"/><path d="M645 164.6 L652 164.6 M649 161.6 L652 164.6 L649 167.6" fill="none" stroke="#1f8ad2" stroke-width="1.6"/><rect x="690" y="158.5" width="18" height="18" fill="none" stroke="#505050" stroke-width="1.4"/><path d="M699 158.5 L699 162 M699 173 L699 176.5" stroke="#505050" stroke-width="1.2"/><rect x="689.5" y="162" width="19" height="11" fill="#fff" stroke="#1f8ad2" stroke-width="1.6"/><path d="M693 167.5 L705 167.5 M695.5 165 L693 167.5 L695.5 170 M702.5 165 L705 167.5 L702.5 170" fill="none" stroke="#1f8ad2" stroke-width="1.4"/><path d="M724.8 166.8 L728.3 170.8 L731.8 166.8" fill="none" stroke="#424242" stroke-width="1.4" stroke-linecap="round" stroke-linejoin="round"/><path d="M933.0 126.5 L936.5 130.5 L940.0 126.5" fill="none" stroke="#424242" stroke-width="1.4" stroke-linecap="round" stroke-linejoin="round"/><rect x="769.5" y="162.5" width="19" height="13" fill="#fff" stroke="#424242" stroke-width="1.5"/><path d="M774 165.5 C771.5 166.5 771.5 171.5 774 172.5 M778 165.5 C775.5 166.5 775.5 171.5 778 172.5" fill="none" stroke="#606060" stroke-width="1.2"/><rect x="779" y="167" width="10" height="11" rx="4" fill="#fff" stroke="#e07a10" stroke-width="1.5"/><path d="M779 170.5 C781 172 787 172 789 170.5 M779 174 C781 175.5 787 175.5 789 174" fill="none" stroke="#e07a10" stroke-width="1.3"/><path d="M798.8 166.5 L802.3 170.5 L805.8 166.5" fill="none" stroke="#424242" stroke-width="1.4" stroke-linecap="round" stroke-linejoin="round"/><path d="M862.3 160.8 C865.3 160.8 867 163 867 166 C867 170.5 863.5 174.3 858.6 175.8 L858.2 174.8 C861 173.3 862.6 171.5 863 169.8 C860 170 857.8 168.2 857.8 165.3 C857.8 162.6 859.8 160.8 862.3 160.8 Z" fill="#424242"/><path d="M896 163.5 L888 163.5 M891 160.5 L888 163.5 L891 166.5" fill="none" stroke="#1f8ad2" stroke-width="1.5"/><path d="M919 172.5 L928 172.5 M925 169.5 L928 172.5 L925 175.5" fill="none" stroke="#1f8ad2" stroke-width="1.5"/><rect x="978" y="113.8" width="34" height="26.200000000000003" fill="#fafafa" stroke="#505050" stroke-width="1.6"/><path d="M984.5 113.8 L984.5 140" stroke="#505050" stroke-width="1.2800000000000002"/><path d="M1005.5 113.8 L1005.5 140" stroke="#505050" stroke-width="1.2800000000000002"/><path d="M978 122.5 L1012 122.5" stroke="#505050" stroke-width="1.2800000000000002"/><path d="M978 131.2 L1012 131.2" stroke="#505050" stroke-width="1.2800000000000002"/><rect x="984.5" y="113.8" width="15" height="8.7" fill="#f7a1a8" stroke="#d42a2a" stroke-width="1.3"/><rect x="984.5" y="122.5" width="10" height="8.7" fill="#8bbcea" stroke="#1f6fc0" stroke-width="1.3"/><rect x="984.5" y="131.2" width="17.8" height="8.8" fill="#f7a1a8" stroke="#d42a2a" stroke-width="1.3"/><path d="M1008.0 176.5 L1011.5 180.5 L1015.0 176.5" fill="none" stroke="#424242" stroke-width="1.4" stroke-linecap="round" stroke-linejoin="round"/><rect x="1053" y="113.8" width="34.5" height="26.200000000000003" fill="#fafafa" stroke="#505050" stroke-width="1.6"/><path d="M1064.6 113.8 L1064.6 140" stroke="#505050" stroke-width="1.2800000000000002"/><path d="M1076 113.8 L1076 140" stroke="#505050" stroke-width="1.2800000000000002"/><path d="M1053 122.5 L1087.5 122.5" stroke="#505050" stroke-width="1.2800000000000002"/><path d="M1053 131.2 L1087.5 131.2" stroke="#505050" stroke-width="1.2800000000000002"/><rect x="1064.6" y="122.5" width="22.9" height="17.5" fill="#8bbcea" stroke="#1f6fc0" stroke-width="1.4"/><path d="M1071 136 L1087 120 C1089 118 1091 119 1090 121 L1075 139" fill="#fff" stroke="#303030" stroke-width="1.4" stroke-linejoin="round"/><path d="M1071 135 C1066 134 1064 139 1061 145 C1068 146 1075 143 1075 138 Z" fill="#8bbcea" stroke="#1f6fc0" stroke-width="1.5" stroke-linejoin="round"/><path d="M1098.0 176.5 L1101.5 180.5 L1105.0 176.5" fill="none" stroke="#424242" stroke-width="1.4" stroke-linecap="round" stroke-linejoin="round"/><rect x="1129" y="113.8" width="34" height="26.200000000000003" fill="#fafafa" stroke="#505050" stroke-width="1.6"/><path d="M1135 113.8 L1135 140" stroke="#505050" stroke-width="1.2800000000000002"/><path d="M1129 119 L1163 119" stroke="#505050" stroke-width="1.2800000000000002"/><path d="M1163 119 L1163 113.8" stroke="#505050"/><rect x="1135" y="119" width="21.5" height="15" fill="#8bbcea" stroke="#1f6fc0" stroke-width="1.5"/><path d="M1146 136 L1162 120 C1164 118 1166 119 1165 121 L1150 139" fill="#fff" stroke="#303030" stroke-width="1.4" stroke-linejoin="round"/><path d="M1146 135 C1141 134 1139 139 1136 145 C1143 146 1150 143 1150 138 Z" fill="#8bbcea" stroke="#1f6fc0" stroke-width="1.5" stroke-linejoin="round"/><path d="M1167.0 176.5 L1170.5 180.5 L1174.0 176.5" fill="none" stroke="#424242" stroke-width="1.4" stroke-linecap="round" stroke-linejoin="round"/><rect x="1204.5" y="109.8" width="19.0" height="16.200000000000003" fill="#fafafa" stroke="#505050" stroke-width="1.5"/><path d="M1211 109.8 L1211 126" stroke="#505050" stroke-width="1.2000000000000002"/><path d="M1217 109.8 L1217 126" stroke="#505050" stroke-width="1.2000000000000002"/><path d="M1204.5 115.2 L1223.5 115.2" stroke="#505050" stroke-width="1.2000000000000002"/><path d="M1204.5 120.6 L1223.5 120.6" stroke="#505050" stroke-width="1.2000000000000002"/><rect x="1211" y="115.2" width="12.5" height="5.4" fill="#8bbcea" stroke="#1f6fc0" stroke-width="1.4"/><path d="M1213 117.9 L1205 117.9 M1208.5 114.5 L1205 117.9 L1208.5 121.3" fill="none" stroke="#1f8ad2" stroke-width="1.6"/><path d="M1281.8 116.2 L1285.3 120.2 L1288.8 116.2" fill="none" stroke="#424242" stroke-width="1.4" stroke-linecap="round" stroke-linejoin="round"/><rect x="1204.5" y="141.6" width="19.0" height="16.400000000000006" fill="#fafafa" stroke="#505050" stroke-width="1.5"/><path d="M1211 141.6 L1211 158" stroke="#505050" stroke-width="1.2000000000000002"/><path d="M1217 141.6 L1217 158" stroke="#505050" stroke-width="1.2000000000000002"/><path d="M1204.5 147.2 L1223.5 147.2" stroke="#505050" stroke-width="1.2000000000000002"/><path d="M1204.5 152.4 L1223.5 152.4" stroke="#505050" stroke-width="1.2000000000000002"/><rect x="1208" y="147.2" width="7" height="5.4" fill="#8bbcea" stroke="#1f6fc0" stroke-width="1.4"/><path d="M1217 145.5 L1223 154 M1223 145.5 L1217 154" stroke="#e53030" stroke-width="1.5"/><path d="M1281.8 149.2 L1285.3 153.2 L1288.8 149.2" fill="none" stroke="#424242" stroke-width="1.4" stroke-linecap="round" stroke-linejoin="round"/><rect x="1204.5" y="174.5" width="19.0" height="16.69999999999999" fill="#fafafa" stroke="#505050" stroke-width="1.5"/><path d="M1210 174.5 L1210 191.2" stroke="#505050" stroke-width="1.2000000000000002"/><path d="M1218 174.5 L1218 191.2" stroke="#505050" stroke-width="1.2000000000000002"/><path d="M1204.5 179.8 L1223.5 179.8" stroke="#505050" stroke-width="1.2000000000000002"/><path d="M1204.5 185.5 L1223.5 185.5" stroke="#505050" stroke-width="1.2000000000000002"/><rect x="1209.5" y="179.8" width="9" height="6" fill="#8bbcea" stroke="#1f6fc0" stroke-width="1.5"/><path d="M1208 172.5 L1220 172.5 M1208 171 L1208 174 M1220 171 L1220 174" stroke="#1f8ad2" stroke-width="1.4"/><path d="M1264.8 180.0 L1268.3 184.0 L1271.8 180.0" fill="none" stroke="#424242" stroke-width="1.4" stroke-linecap="round" stroke-linejoin="round"/><path d="M1344 112 L1344 109.8 L1328.5 109.8 L1337 118 L1328.5 126 L1344 126 L1344 123.5" fill="none" stroke="#424242" stroke-width="1.8" stroke-linejoin="miter"/><path d="M1361.9 116.2 L1365.4 120.2 L1368.9 116.2" fill="none" stroke="#424242" stroke-width="1.4" stroke-linecap="round" stroke-linejoin="round"/><rect x="1326.8" y="141.8" width="18.5" height="16.2" fill="#fafafa" stroke="#424242" stroke-width="1.5"/><path d="M1326.8 144.5 L1345.3 144.5" stroke="#424242" stroke-width="1.5"/><path d="M1336 147 L1336 155 M1332.5 151.8 L1336 155.3 L1339.5 151.8" fill="none" stroke="#1f8ad2" stroke-width="1.6"/><path d="M1353.9 148.5 L1357.4 152.5 L1360.9 148.5" fill="none" stroke="#424242" stroke-width="1.4" stroke-linecap="round" stroke-linejoin="round"/><path d="M1327 182 L1336 173 L1345 182 L1336 191 Z" fill="#fafafa" stroke="#9c3ab0" stroke-width="1.5" stroke-linejoin="round"/><path d="M1327 182 L1331.5 177.5 L1340.5 186.5 L1336 191 Z" fill="#d39ee0" stroke="#9c3ab0" stroke-width="1.5" stroke-linejoin="round"/><path d="M1353.9 180.5 L1357.4 184.5 L1360.9 180.5" fill="none" stroke="#424242" stroke-width="1.4" stroke-linecap="round" stroke-linejoin="round"/><path d="M1416 118.5 L1436.5 118.5 L1428.5 128 L1428.5 137 L1424.5 137 L1424.5 128 Z" fill="#fafafa" stroke="#424242" stroke-width="1.6" stroke-linejoin="round"/><path d="M1444.0 176.5 L1447.5 180.5 L1451.0 176.5" fill="none" stroke="#424242" stroke-width="1.4" stroke-linecap="round" stroke-linejoin="round"/><g fill="none" stroke="#424242" stroke-width="1.6"><circle cx="1488.5" cy="122" r="12.5"/><path d="M1479.5 131 L1466 145"/></g><path d="M1496.0 176.5 L1499.5 180.5 L1503.0 176.5" fill="none" stroke="#424242" stroke-width="1.4" stroke-linecap="round" stroke-linejoin="round"/><g fill="none" stroke="#e05a2b" stroke-width="2.2"><rect x="1539.5" y="110.5" width="33.5" height="33.5"/><rect x="1545" y="116" width="9.5" height="9.5"/><rect x="1558" y="116" width="9.5" height="9.5"/><rect x="1545" y="129" width="9.5" height="9.5"/><rect x="1558" y="129" width="9.5" height="9.5"/></g><defs><linearGradient id="cg1" x1="0" y1="0" x2="0" y2="1"><stop offset="0" stop-color="#2cb8f6"/><stop offset=".3" stop-color="#1a94dc"/><stop offset=".6" stop-color="#5bb15a"/><stop offset="1" stop-color="#f6cb00"/></linearGradient><linearGradient id="cg2" x1="0" y1="0" x2="0" y2="1"><stop offset="0" stop-color="#a64ae9"/><stop offset=".5" stop-color="#ef4f8b"/><stop offset="1" stop-color="#ffa553"/></linearGradient><linearGradient id="cg3" x1="0" y1="0" x2="1" y2="1"><stop offset="0" stop-color="#ff8a4a"/><stop offset="1" stop-color="#e23b2e"/></linearGradient><linearGradient id="cg4" x1="0" y1="0" x2="1" y2="1"><stop offset="0" stop-color="#0a36c8"/><stop offset="1" stop-color="#2a7ae8"/></linearGradient></defs><path d="M1631 111 C1634 109.5 1638 110 1639.2 113 L1641.5 119.8 L1629.5 119.8 Z" fill="url(#cg4)"/><path d="M1620 134 L1630.5 134 L1627.5 143.3 L1624.5 143.3 C1623 143.3 1622.3 142.5 1622 141 Z" fill="url(#cg3)"/><path d="M1620.5 110.2 L1635.5 110.2 L1625.8 132 C1625 133.5 1624 134.2 1622.5 134.2 L1614.2 134.2 C1612.2 134.2 1611.4 132.7 1611.8 130.7 L1615.8 114.8 C1616.5 112 1618.2 110.2 1620.5 110.2 Z" fill="url(#cg1)"/><path d="M1637.5 119.6 L1645.2 119.6 C1647.7 119.6 1648.7 121.2 1648.2 123.6 L1643.8 140.2 C1643 142.5 1641.7 143.4 1639.6 143.4 L1627.4 143.4 L1634.2 121.8 C1634.7 120.4 1635.8 119.6 1637.5 119.6 Z" fill="url(#cg2)"/><g fill="none" stroke="#2a6ad8" stroke-width="1.4" stroke-linecap="round" stroke-linejoin="round"><path d="M1727.5 137.7 L1720.3 137.7 Q1718.3 137.7 1718.3 135.7 L1718.3 117.2 Q1718.3 115.2 1720.3 115.2 L1731.7 115.2 L1736.6 120.2 L1736.6 127.7"/><path d="M1727 120.4 L1727 124.6 C1726.5 127 1724.5 129.5 1722 130.8 M1727.5 125.5 C1729 127 1731 127.5 1733.3 127.7"/><path d="M1731.7 136.2 L1729.8 138.2 Q1728.2 140 1730 141.8 Q1731.8 143.6 1733.6 141.8 L1737.8 137.5 L1737.5 134.5"/><path d="M1734 136 L1733.5 134.5 L1738.8 129.5 Q1740.6 127.8 1742.4 129.6 Q1744.2 131.4 1742.4 133.2 L1740.5 135"/></g><path d="M1823.5 112 L1831.5 112 M1824.5 112 L1824.5 125 L1814 140 C1813 142 1814 143 1816 143 L1839 143 C1841 143 1842 142 1841 140 L1830.5 125 L1830.5 112" fill="none" stroke="#303030" stroke-width="1.7" stroke-linejoin="round"/><path d="M1819 132 L1836 132 L1840.5 140 C1841 142 1840 142.5 1838.5 142.5 L1816.5 142.5 C1815 142.5 1814 142 1814.5 140 Z" fill="#1d6b3a"/><path d="M120.0 251.0 L126 257.0 L132.0 251.0" fill="none" stroke="#303030" stroke-width="1.5" stroke-linecap="round" stroke-linejoin="round"/><rect x="149.3" y="246.3" width="3" height="3" fill="#404040"/><rect x="149.3" y="251" width="3" height="3" fill="#404040"/><rect x="149.3" y="255.8" width="3" height="3" fill="#404040"/><path d="M172 245 L186 259 M186 245 L172 259" stroke="#a6a6a6" stroke-width="1.5"/><path d="M199.5 251.5 L205.5 257.5 L218.5 245" fill="none" stroke="#a6a6a6" stroke-width="1.5"/><path d="M255.5 249.95 L261 255.45 L266.5 249.95" fill="none" stroke="#909090" stroke-width="1.3" stroke-linecap="round" stroke-linejoin="round"/><rect x="280" y="266" width="215" height="5" rx="1.5" fill="#ff0000"/><path d="M1891.0 248.0 L1897 254.0 L1903.0 248.0" fill="none" stroke="#303030" stroke-width="1.5" stroke-linecap="round" stroke-linejoin="round"/><path d="M13 307 L37 307 L37 283 Z" fill="#b5b5b5"/><circle cx="54" cy="330.5" r="8.6" fill="#000"/><defs><filter id="bl1" x="-50%" y="-50%" width="200%" height="200%"><feGaussianBlur stdDeviation="1.6"/></filter><filter id="bl2" x="-50%" y="-50%" width="200%" height="200%"><feGaussianBlur stdDeviation="4"/></filter></defs><circle cx="1192.5" cy="415.7" r="19.5" fill="#9a9a9a" filter="url(#bl1)"/><circle cx="1193" cy="416" r="11" fill="#d4d4d4" filter="url(#bl2)"/><g fill="none" stroke="#fff" stroke-width="9.5" stroke-linejoin="round"><path d="M1176 404.6 L1182.1 400.6 L1182.1 432.6"/><path d="M1191.8 404 C1194.5 400.5 1198.5 399.2 1201.5 399.5 C1205.5 400 1207.2 403 1207 406.3 C1206.7 410.3 1203.5 413.3 1199.3 417.5 C1195 421.8 1192.2 425.8 1192.2 430.5 L1208.8 430.5"/></g><circle cx="1192.5" cy="415.7" r="24.3" fill="none" stroke="#ff0000" stroke-width="2.6"/><g fill="none" stroke="#ff0000" stroke-width="4" stroke-linejoin="miter"><path d="M1176 404.6 L1182.1 400.6 L1182.1 432.6"/><path d="M1191.8 404 C1194.5 400.5 1198.5 399.2 1201.5 399.5 C1205.5 400 1207.2 403 1207 406.3 C1206.7 410.3 1203.5 413.3 1199.3 417.5 C1195 421.8 1192.2 425.8 1192.2 430.5 L1208.8 430.5"/></g><path d="M1901.5 292 L1906.5 285 L1911.5 292 Z" fill="#707070" stroke="#707070" stroke-width="1.5" stroke-linejoin="round"/><path d="M1901.5 1000.5 L1906.5 1008 L1911.5 1000.5 Z" fill="#707070" stroke="#707070" stroke-width="1.5" stroke-linejoin="round"/><path d="M41 1025 L34 1031 L41 1037" fill="none" stroke="#a0a0a0" stroke-width="1.4"/><path d="M73 1025 L80 1031 L73 1037" fill="none" stroke="#a0a0a0" stroke-width="1.4"/><path d="M398 1024 L398 1038 M391 1031 L405 1031" stroke="#404040" stroke-width="1.6"/><rect x="1154" y="1024.5" width="3" height="3" fill="#404040"/><rect x="1154" y="1030" width="3" height="3" fill="#404040"/><rect x="1154" y="1035.5" width="3" height="3" fill="#404040"/><path d="M1190 1026.5 L1182.5 1031.5 L1190 1036.5 Z" fill="#707070" stroke="#707070" stroke-linejoin="round"/><path d="M1881.5 1026.5 L1889 1031.5 L1881.5 1036.5 Z" fill="#707070" stroke="#707070" stroke-linejoin="round"/><g fill="none" stroke="#303030" stroke-width="1.4"><path d="M107 1073.3 L101.6 1073.3 L101.6 1058.8 L118.4 1058.8 L118.4 1064"/><path d="M101.6 1061.3 L118.4 1061.3"/><path d="M104 1064 L107.5 1064 M104 1066.5 L106 1066.5 M104 1069 L106 1069"/><circle cx="113.1" cy="1068.9" r="4.8"/></g><circle cx="113.1" cy="1068.9" r="2" fill="#303030"/><g fill="none" stroke="#303030" stroke-width="1.3" stroke-linecap="round" stroke-linejoin="round"><circle cx="148.6" cy="1059.7" r="2.1"/><path d="M146.3 1062.5 Q143.5 1060 141.8 1061.5 Q141 1063.5 144.5 1064.5 Q146 1066.5 145.3 1070.5 Q144.5 1073.8 146.8 1073.5"/><path d="M150.8 1062.5 Q153.5 1060 155.3 1061.5 Q156 1063.5 152.5 1064.5 L151.8 1067.5"/><path d="M149.2 1070.3 L153.3 1074 L159.6 1067.4"/></g><g fill="none" stroke="#404040" stroke-width="1.3"><rect x="1538.5" y="1057.5" width="16" height="15"/><path d="M1543.8 1057.5 L1543.8 1072.5 M1549.2 1057.5 L1549.2 1072.5 M1538.5 1062.5 L1554.5 1062.5 M1538.5 1067.5 L1554.5 1067.5"/></g><g fill="none" stroke="#404040" stroke-width="1.3"><rect x="1588.5" y="1057.5" width="17" height="15"/><rect x="1591.5" y="1060.5" width="11" height="9"/><path d="M1594 1063 L1600 1063 M1594 1065 L1600 1065 M1594 1067 L1600 1067"/></g><g fill="none" stroke="#404040" stroke-width="1.3"><rect x="1638.5" y="1057.5" width="17" height="15"/><path d="M1644 1057.5 L1644 1065 L1650 1065 L1650 1057.5 M1638.5 1065 L1644 1065"/></g><path d="M1679 1065.5 L1689.5 1065.5 M1825 1065.5 L1835.5 1065.5 M1830.3 1060.3 L1830.3 1070.8" stroke="#404040" stroke-width="1.3"/><path d="M1912 0 A8 8 0 0 1 1920 8 L1920 0 Z" fill="#f0dde5"/><path d="M0 1072 A8 8 0 0 0 8 1080 L0 1080 Z" fill="#d2d2d2"/><path d="M0.6 1071 L0.6 1072 A7.4 7.4 0 0 0 8 1079.4 L9 1079.4" fill="none" stroke="#107c41" stroke-width="1.3"/><path d="M1920 1072 A8 8 0 0 1 1912 1080 L1920 1080 Z" fill="#3a3a3a"/><path d="M1919.4 1071 L1919.4 1072 A7.4 7.4 0 0 1 1912 1079.4 L1911 1079.4" fill="none" stroke="#107c41" stroke-width="1.3"/></svg>
</body></html>
